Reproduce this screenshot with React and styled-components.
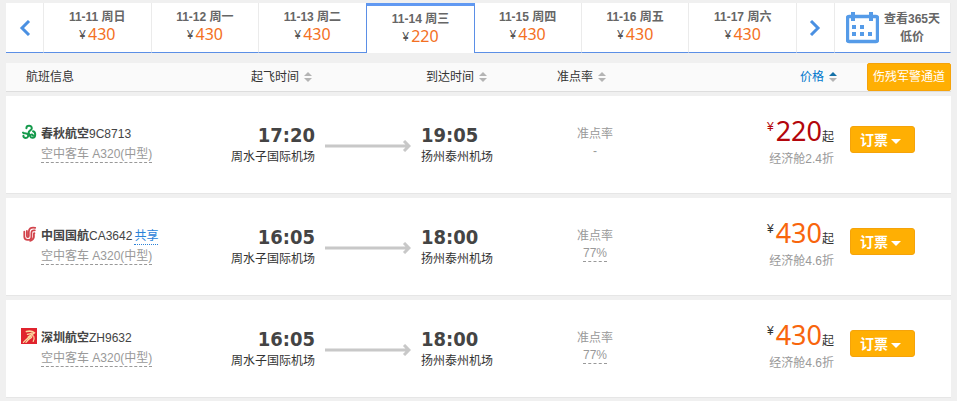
import React from "react";
import styled, { createGlobalStyle } from "styled-components";

const days = [
  { date: "11-11 周日", price: 430 },
  { date: "11-12 周一", price: 430 },
  { date: "11-13 周二", price: 430 },
  { date: "11-14 周三", price: 220, active: true },
  { date: "11-15 周四", price: 430 },
  { date: "11-16 周五", price: 430 },
  { date: "11-17 周六", price: 430 },
];

const SpringLogo = () => (
  <Logo viewBox="0 0 16 16" aria-hidden="true">
    <g fill="none" stroke="#159a4c" strokeWidth="2" strokeLinecap="round">
      <path d="M5.400 4.200C5.400 1 10.800 1 10.800 4.200c0 2.200-3 2.200-3.200 4.400 0 1.400.8 2 1.400 2.800" />
      <path d="M2 8.600c.6 1.200 2.200.2 3.800 1 2.600 1.400 1.400 4.400-1 4.400-1.600 0-2.600-1-2.400-2.200" />
      <path d="M12 7.200c3 .8 3 6.400-.4 6.600-2.400.2-3.200-2.600-1.400-3.200 1-.3 1.600.2 1.800.8" />
    </g>
  </Logo>
);

const AirChinaLogo = () => (
  <Logo viewBox="0 0 16 16" aria-hidden="true">
    <g fill="none" stroke="#d2444c" strokeWidth="1.800" strokeLinecap="round">
      <path d="M14.200 1.800C9.800 1 7.800 2.600 7.800 6v4c0 1.600-1.900 1.600-1.900 0V5" />
      <path d="M13.800 4.400c-2.600-.3-3.400.6-3.400 2.800v4c-.2 3.800-7 3.600-7.100-.4V5.600" />
      <path d="M13.400 7.200c-.6 0-.5.4-.5 1.400v2.400c-.4 2-1.800 3.200-3.800 3.800" />
    </g>
  </Logo>
);

const ShenzhenLogo = () => (
  <Logo viewBox="0 0 16 16" aria-hidden="true">
    <path fill="#e0232e" d="M0 0h16v16H0z" />
    <g fill="none" stroke="#fbd9a0" strokeLinecap="round">
      <path strokeWidth="1.600" d="M5.400 3.600c3-.8 5.800-.6 8 1.200-1.600 1.800-4.400 2-6.200 4.400" />
      <path strokeWidth="1.200" d="M6.400 6.400c2-.2 3.400-.6 4.600-1.400M12 7.600C8 8.600 5.400 11 2.400 14.400" />
      <path strokeWidth="1.200" d="M12.800 8.400c.6 1.600.2 3.600-.6 5M10.600 9.400C8.400 10.400 6.600 12 5 14.400" />
    </g>
  </Logo>
);

const flights = [
  {
    logo: <SpringLogo />,
    airline: "春秋航空",
    code: "9C8713",
    from: "17:20",
    to: "19:05",
    price: 220,
    discount: "经济舱2.4折",
    lowest: true,
  },
  {
    logo: <AirChinaLogo />,
    airline: "中国国航",
    code: "CA3642",
    shared: true,
    from: "16:05",
    to: "18:00",
    rate: "77%",
    price: 430,
    discount: "经济舱4.6折",
  },
  {
    logo: <ShenzhenLogo />,
    airline: "深圳航空",
    code: "ZH9632",
    from: "16:05",
    to: "18:00",
    rate: "77%",
    price: 430,
    discount: "经济舱4.6折",
  },
];

const Chevron = ({ d }) => (
  <svg width="12" height="16" viewBox="0 0 12 16" aria-hidden="true">
    <path d={d} fill="none" stroke="#4a90e2" strokeWidth="3" />
  </svg>
);

const CalendarIcon = () => (
  <svg width="33" height="32" viewBox="0 0 33 32" aria-hidden="true">
    <rect x="1.500" y="4.500" width="30" height="25" rx="1.500" fill="none" stroke="#559be8" strokeWidth="3.400" />
    <path
      fill="#559be8"
      d="M5 0h4v9H5zM23 0h4v9h-4zM6 13h4v4H6zM14 13h4v4h-4zM6 20h4v4H6zM14 20h4v4h-4zM22 20h4v4h-4z"
    />
  </svg>
);

const SortIcon = ({ up = "#b4b4b4" }) => (
  <svg width="8" height="10" viewBox="0 0 8 10" aria-hidden="true">
    <path fill={up} d="M4 0l4 4H0z" />
    <path fill="#b4b4b4" d="M4 10L0 6h8z" />
  </svg>
);

const Flight = ({ flight }) => (
  <Row>
    <InfoCell>
      {flight.logo}
      <div>
        <Airline>
          <strong>{flight.airline}</strong>
          {flight.code}
          {flight.shared && <Shared href="#shared">共享</Shared>}
        </Airline>
        <Plane>空中客车 A320(中型)</Plane>
      </div>
    </InfoCell>
    <TimeCell $align="right">
      <Time>{flight.from}</Time>
      <Airport>周水子国际机场</Airport>
    </TimeCell>
    <ArrowCell>
      <svg width="86" height="12" viewBox="0 0 86 12" aria-hidden="true">
        <path d="M0 6h84M79 1l5 5-5 5" fill="none" stroke="#c8c8c8" strokeWidth="3" />
      </svg>
    </ArrowCell>
    <TimeCell>
      <Time>{flight.to}</Time>
      <Airport>扬州泰州机场</Airport>
    </TimeCell>
    <RateCell>
      准点率
      <div>{flight.rate ? <Rate>{flight.rate}</Rate> : "-"}</div>
    </RateCell>
    <PriceCell>
      <Price $lowest={flight.lowest}>
        <small>¥</small>
        <b>{flight.price}</b>
        <span>起</span>
      </Price>
      <Discount>{flight.discount}</Discount>
    </PriceCell>
    <BookCell>
      <BookButton type="button">
        订票
        <svg width="10" height="8" viewBox="0 0 10 8" aria-hidden="true">
          <path fill="#fff" d="M0 3h10L5 8z" />
        </svg>
      </BookButton>
    </BookCell>
  </Row>
);

export default () => {
  return (
    <Page>
      <GlobalStyle />
      <DateBar>
        <NavButton type="button" aria-label="前一天">
          <Chevron d="M10 1L3 8l7 7" />
        </NavButton>
        {days.map(day => (
          <Day type="button" key={day.date} $active={day.active}>
            <strong>{day.date}</strong>
            <DayPrice>
              <small>¥</small>
              {day.price}
            </DayPrice>
          </Day>
        ))}
        <NavButton type="button" aria-label="后一天">
          <Chevron d="M2 1l7 7-7 7" />
        </NavButton>
        <Calendar href="#calendar">
          <CalendarIcon />
          <span>
            查看365天
            <br />
            低价
          </span>
        </Calendar>
      </DateBar>

      <List>
        <thead>
          <HeadRow>
            <HeadCell $indent={20}>航班信息</HeadCell>
            <HeadCell $indent={20} $span={2}>
              <Sort type="button">
                起飞时间 <SortIcon />
              </Sort>
            </HeadCell>
            <HeadCell $indent={5}>
              <Sort type="button">
                到达时间 <SortIcon />
              </Sort>
            </HeadCell>
            <HeadCell $indent={16}>
              <Sort type="button">
                准点率 <SortIcon />
              </Sort>
            </HeadCell>
            <HeadCell $right $span={2}>
              <Sort type="button" $active>
                价格 <SortIcon up="#1571a8" />
              </Sort>
              <Channel type="button">伤残军警通道</Channel>
            </HeadCell>
          </HeadRow>
        </thead>
        <tbody>
          {flights.map(flight => (
            <Flight key={flight.code} flight={flight} />
          ))}
        </tbody>
      </List>
    </Page>
  );
};

// Styled components
const GlobalStyle = createGlobalStyle`
  * {
    box-sizing: border-box;
  }

  body {
    margin: 0;
    background: #f0f0f0;
    color: #333333;
    font-family: "Liberation Sans", "Noto Sans CJK SC", sans-serif;
    font-size: 12px;
    line-height: 20px;
  }

  button {
    padding: 0;
    border: 0;
    background: none;
    color: inherit;
    font: inherit;
    cursor: pointer;
  }

  svg {
    flex: none;
  }
`;

const Page = styled.div`
  padding: 3px 6px;
`;

const DateBar = styled.nav`
  display: grid;
  grid-template-columns: 38px repeat(7, 1fr) 38px 116px;
  height: 50px;
  background: #ffffff;

  > * {
    border-right: 1px solid #ebebeb;
    border-bottom: 1px solid #5b8fe6;
  }
`;

const NavButton = styled.button`
  display: flex;
  align-items: center;
  justify-content: center;
`;

const Day = styled.button`
  display: flex;
  flex-direction: column;
  align-items: center;
  padding-top: 6px;
  color: #666666;
  line-height: 17px;

  ${({ $active }) =>
    $active &&
    `
    margin: 0 -1px;
    padding-top: 5px;
    border: 1px solid #5b8fe6;
    border-top: 3px solid #6199f2;
    border-bottom: 0;
  `}
`;

const DayPrice = styled.span`
  display: flex;
  gap: 2px;
  color: #f37022;
  font-family: "Noto Sans", sans-serif;
  font-size: 16px;

  small {
    color: #555555;
    font-size: 12px;
  }
`;

const Calendar = styled.a`
  display: flex;
  align-items: center;
  gap: 5px;
  padding-left: 11px;
  color: #666666;
  font-weight: bold;
  line-height: 18px;
  text-align: center;
  text-decoration: none;
`;

const List = styled.table`
  display: block;
  margin-top: 10px;

  thead,
  tbody {
    display: grid;
    gap: 4px;
  }

  tbody {
    margin-top: 4px;
  }
`;

const Row = styled.tr`
  display: grid;
  grid-template-columns: 225fr 84px 106px 120fr 108px 185fr 117px;
  padding: 28px 0 26px;
  min-height: 98px;
  background: #ffffff;
  border-bottom: 1px solid #e6e6e6;

  td,
  th {
    padding: 0;
  }
`;

const HeadRow = styled(Row)`
  padding: 0;
  min-height: 29px;
  background: #fafafa;
  border-color: #dddddd;
  line-height: 22px;
`;

const HeadCell = styled.th`
  && {
    display: flex;
    align-items: center;
    justify-content: ${({ $right }) => ($right ? "flex-end" : "flex-start")};
    gap: 30px;
    grid-column: span ${({ $span = 1 }) => $span};
    padding-left: ${({ $indent = 0 }) => $indent}px;
    font-weight: normal;
  }
`;

const Sort = styled.button`
  display: flex;
  align-items: center;
  gap: 5px;
  color: ${({ $active }) => ($active ? "#0077cc" : "inherit")};
`;

const Channel = styled.button`
  height: 28px;
  padding: 0 5px;
  border: 1px solid #f5a30a;
  border-radius: 2px;
  background: #ffaf03;
  color: #ffffff;
`;

const InfoCell = styled.td`
  display: flex;
  gap: 4px;

  && {
    padding-left: 15px;
  }
`;

const Logo = styled.svg`
  width: 16px;
  height: 16px;
`;

const Airline = styled.div`
  color: #444444;
`;

const Shared = styled.a`
  display: inline-block;
  margin-left: 2px;
  border-bottom: 1px dotted #2b82d9;
  color: #2b82d9;
  line-height: 15px;
  text-decoration: none;
`;

const Plane = styled.span`
  display: inline-block;
  margin-top: 3px;
  border-bottom: 1px dashed #999999;
  color: #999999;
  line-height: 15px;
`;

const TimeCell = styled.td`
  text-align: ${({ $align = "left" }) => $align};
`;

const Time = styled.div`
  color: #444444;
  font-family: "DejaVu Sans Condensed", "DejaVu Sans", sans-serif;
  font-size: 20px;
  font-weight: bold;
  line-height: 22px;
`;

const Airport = styled.div`
  margin-top: 2px;
  line-height: 18px;
  white-space: nowrap;
`;

const ArrowCell = styled.td`
  display: flex;
  justify-content: center;
  align-items: center;
`;

const RateCell = styled.td`
  color: #999999;
  text-align: center;

  div {
    line-height: 15px;
  }
`;

const Rate = styled.span`
  display: inline-block;
  border-bottom: 1px dashed #999999;
`;

const PriceCell = styled.td`
  display: flex;
  flex-direction: column;
  align-items: flex-end;
  margin-top: -7px;
`;

const Price = styled.div`
  display: flex;
  align-items: baseline;
  line-height: 28px;

  small {
    align-self: flex-start;
    margin-right: 2px;
    color: ${({ $lowest }) => ($lowest ? "#b3060c" : "#333333")};
    font-size: 12px;
    line-height: 20px;
  }

  b {
    color: ${({ $lowest }) => ($lowest ? "#b3060c" : "#f8650c")};
    font-family: "Noto Sans", sans-serif;
    font-size: 27px;
    font-weight: normal;
  }
`;

const Discount = styled.div`
  color: #999999;
  line-height: 16px;
`;

const BookCell = styled.td`
  && {
    padding: 2px 0 0 16px;
  }
`;

const BookButton = styled.button`
  display: flex;
  align-items: center;
  justify-content: center;
  gap: 3px;
  width: 65px;
  height: 27px;
  padding-right: 4px;
  border: 1px solid #f5a30a;
  border-radius: 3px;
  background: #ffaf03;
  color: #ffffff;
  font-size: 14px;
  font-weight: bold;
`;
